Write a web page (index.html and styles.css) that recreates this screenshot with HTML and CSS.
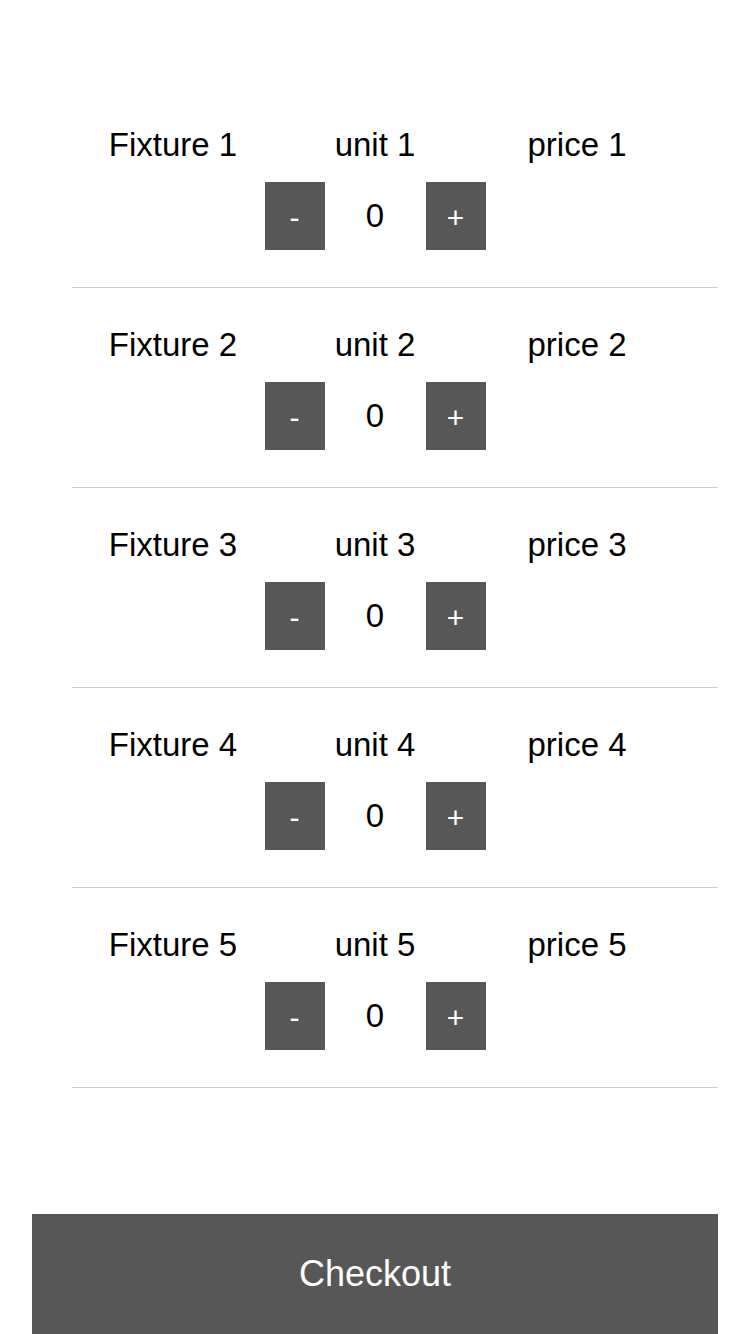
FILE: index.html
```html
<!DOCTYPE html>
<html lang="en">
<head>
    <meta charset="UTF-8">
    <meta name="viewport" content="width=device-width, initial-scale=1.0">
    <title>Fixtures</title>
    <link rel="stylesheet" href="styles.css">
</head>
<body>
    <div class="container">
        <div class="fixture-list">
            <div class="fixture-row">
                <div class="fixture-info">
                    <span>Fixture 1</span>
                    <span>unit 1</span>
                    <span>price 1</span>
                </div>
                <div class="stepper">
                    <button class="step-btn">-</button>
                    <span class="qty">0</span>
                    <button class="step-btn">+</button>
                </div>
            </div>
            <div class="fixture-row">
                <div class="fixture-info">
                    <span>Fixture 2</span>
                    <span>unit 2</span>
                    <span>price 2</span>
                </div>
                <div class="stepper">
                    <button class="step-btn">-</button>
                    <span class="qty">0</span>
                    <button class="step-btn">+</button>
                </div>
            </div>
            <div class="fixture-row">
                <div class="fixture-info">
                    <span>Fixture 3</span>
                    <span>unit 3</span>
                    <span>price 3</span>
                </div>
                <div class="stepper">
                    <button class="step-btn">-</button>
                    <span class="qty">0</span>
                    <button class="step-btn">+</button>
                </div>
            </div>
            <div class="fixture-row">
                <div class="fixture-info">
                    <span>Fixture 4</span>
                    <span>unit 4</span>
                    <span>price 4</span>
                </div>
                <div class="stepper">
                    <button class="step-btn">-</button>
                    <span class="qty">0</span>
                    <button class="step-btn">+</button>
                </div>
            </div>
            <div class="fixture-row">
                <div class="fixture-info">
                    <span>Fixture 5</span>
                    <span>unit 5</span>
                    <span>price 5</span>
                </div>
                <div class="stepper">
                    <button class="step-btn">-</button>
                    <span class="qty">0</span>
                    <button class="step-btn">+</button>
                </div>
            </div>
        </div>

        <button class="checkout-btn">Checkout</button>
    </div>
</body>
</html>
```

FILE: styles.css
```css
body {
    margin: 0;
    font-family: "Liberation Sans", Arial, sans-serif;
    background-color: #FFFFFF;
    color: #000000;
}

.container {
    padding-top: 88px;
}

.fixture-list {
    margin-left: 72px;
    margin-right: 32px;
}

.fixture-row {
    padding: 38px 0 37px;
    border-bottom: 1px solid #CCCCCC;
}

.fixture-info {
    display: grid;
    grid-template-columns: repeat(3, 202px);
    height: 40px;
    line-height: 38px;
    font-size: 33px;
    text-align: center;
}

.stepper {
    display: flex;
    justify-content: center;
    align-items: center;
    width: 606px;
    margin-top: 16px;
    gap: 41px;
}

.step-btn {
    width: 60px;
    height: 68px;
    padding: 0 0 0;
    border: none;
    border-radius: 0;
    background-color: #575757;
    color: #FFFFFF;
    font-family: "Liberation Sans", Arial, sans-serif;
    font-size: 30px;
    line-height: 72px;
    cursor: pointer;
}

.qty {
    font-size: 33px;
    width: 19px;
    text-align: center;
}

.checkout-btn {
    display: block;
    width: 686px;
    height: 120px;
    margin: 126px 0 0 32px;
    border: none;
    background-color: #575757;
    color: #FFFFFF;
    font-family: "Liberation Sans", Arial, sans-serif;
    font-size: 36px;
    cursor: pointer;
}
```
